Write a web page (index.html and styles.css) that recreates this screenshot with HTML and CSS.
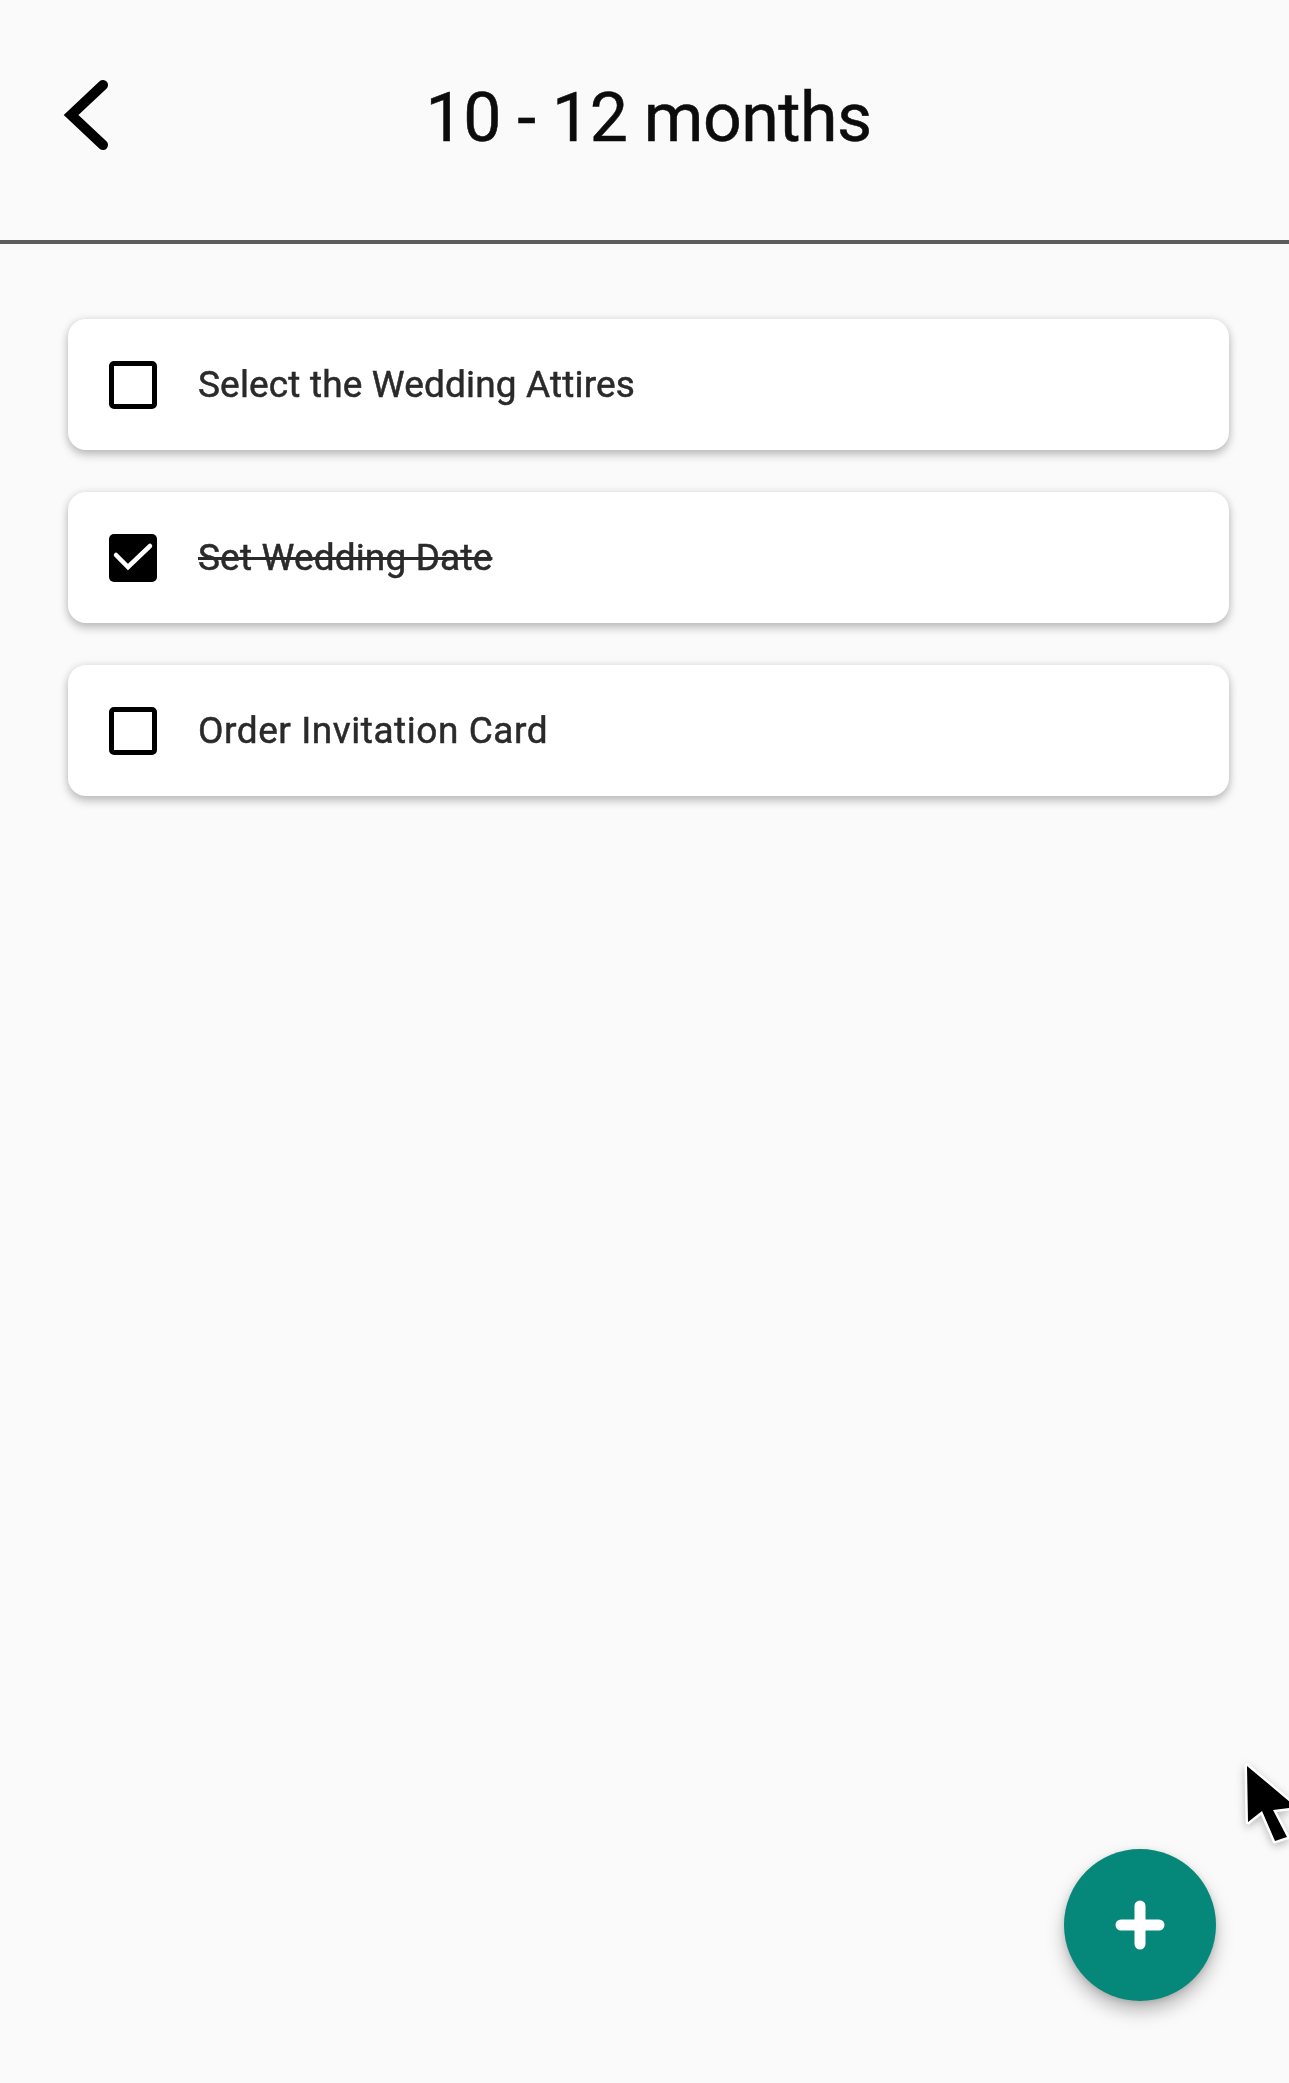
FILE: index.html
```html
<!DOCTYPE html>
<html lang="en">
<head>
<meta charset="utf-8">
<title>10 - 12 months</title>
<link rel="stylesheet" href="styles.css">
</head>
<body>
<div class="screen">
  <header class="topbar">
    <button class="back" aria-label="Back">
      <svg class="back-icon" viewBox="0 0 48 72"><path d="M41 5 L9 35 L41 65"/></svg>
    </button>
    <h1 class="title">10 - 12 months</h1>
  </header>
  <main class="list">
    <div class="card">
      <span class="box"></span>
      <span class="label">Select the Wedding Attires</span>
    </div>
    <div class="card">
      <span class="box box-checked">
        <svg class="tick" viewBox="0 0 48 48"><path d="M7 21 L19 33 L41 12"/></svg>
      </span>
      <span class="label label-done">Set Wedding Date</span>
    </div>
    <div class="card">
      <span class="box"></span>
      <span class="label label-wide">Order Invitation Card</span>
    </div>
  </main>
  <button class="fab" aria-label="Add">
    <svg class="plus" viewBox="0 0 50 50"><path d="M25 6 V44 M6 25 H44"/></svg>
  </button>
  <svg class="cursor" viewBox="0 0 49 92"><path d="M7 8 L8 64 L22 53 L35 83 L47 79 L33 52 L56 49 Z"/></svg>
</div>
</body>
</html>
```
FILE: styles.css
```css
* { box-sizing: border-box; }
html, body { margin: 0; padding: 0; }
body { background: #fafafa; font-family: Roboto, "Liberation Sans", sans-serif; }
.screen { position: relative; width: 1289px; height: 2083px; overflow: hidden; background: #fafafa; filter: blur(0.7px); }

.topbar { position: relative; height: 244px; border-bottom: 4px solid #5c5c5c; display: flex; align-items: flex-start; justify-content: center; padding-top: 76px; }
.title { margin: 0; padding-left: 8px; font-size: 68px; line-height: 84px; font-weight: 400; color: #0c0c0c; letter-spacing: -0.5px; -webkit-text-stroke: 0.5px #0c0c0c; }
.back { position: absolute; left: 62px; top: 80px; width: 48px; height: 72px; padding: 0; border: 0; background: none; }
.back-icon { display: block; width: 48px; height: 72px; fill: none; stroke: #000; stroke-width: 10; stroke-linecap: round; stroke-linejoin: miter; }

.list { display: flex; flex-direction: column; gap: 42px; padding: 75px 60px 0 68px; }
.card { height: 131px; display: flex; align-items: center; gap: 41px; padding-left: 41px; background: #fff; border-radius: 18px; box-shadow: 0 5px 10px rgba(0,0,0,.22), 0 0 8px rgba(0,0,0,.1); }
.box { flex: none; width: 48px; height: 48px; border: 5px solid #000; border-radius: 5px; background: #fff; }
.box-checked { border: 0; background: #000; }
.tick { display: block; width: 48px; height: 48px; fill: none; stroke: #fff; stroke-width: 4.5; stroke-linecap: round; }
.label { font-size: 37px; line-height: 48px; color: #2a2a2a; letter-spacing: 0.15px; -webkit-text-stroke: 0.5px #2a2a2a; }
.label-wide { letter-spacing: 0.55px; }
.label-done { text-decoration: line-through; }

.fab { position: absolute; left: 1064px; top: 1849px; width: 152px; height: 152px; padding: 0; border: 0; border-radius: 50%; background: #05877a; box-shadow: 0 10px 18px rgba(0,0,0,.26), 0 2px 6px rgba(0,0,0,.12); display: flex; align-items: center; justify-content: center; }
.plus { width: 50px; height: 50px; fill: none; stroke: #fff; stroke-width: 11; stroke-linecap: round; }
.cursor { position: absolute; left: 1240px; top: 1758px; width: 49px; height: 92px; overflow: hidden; fill: #000; stroke: #fff; stroke-width: 5; paint-order: stroke; stroke-linejoin: round; filter: drop-shadow(0 3px 4px rgba(0,0,0,.25)); }
```
